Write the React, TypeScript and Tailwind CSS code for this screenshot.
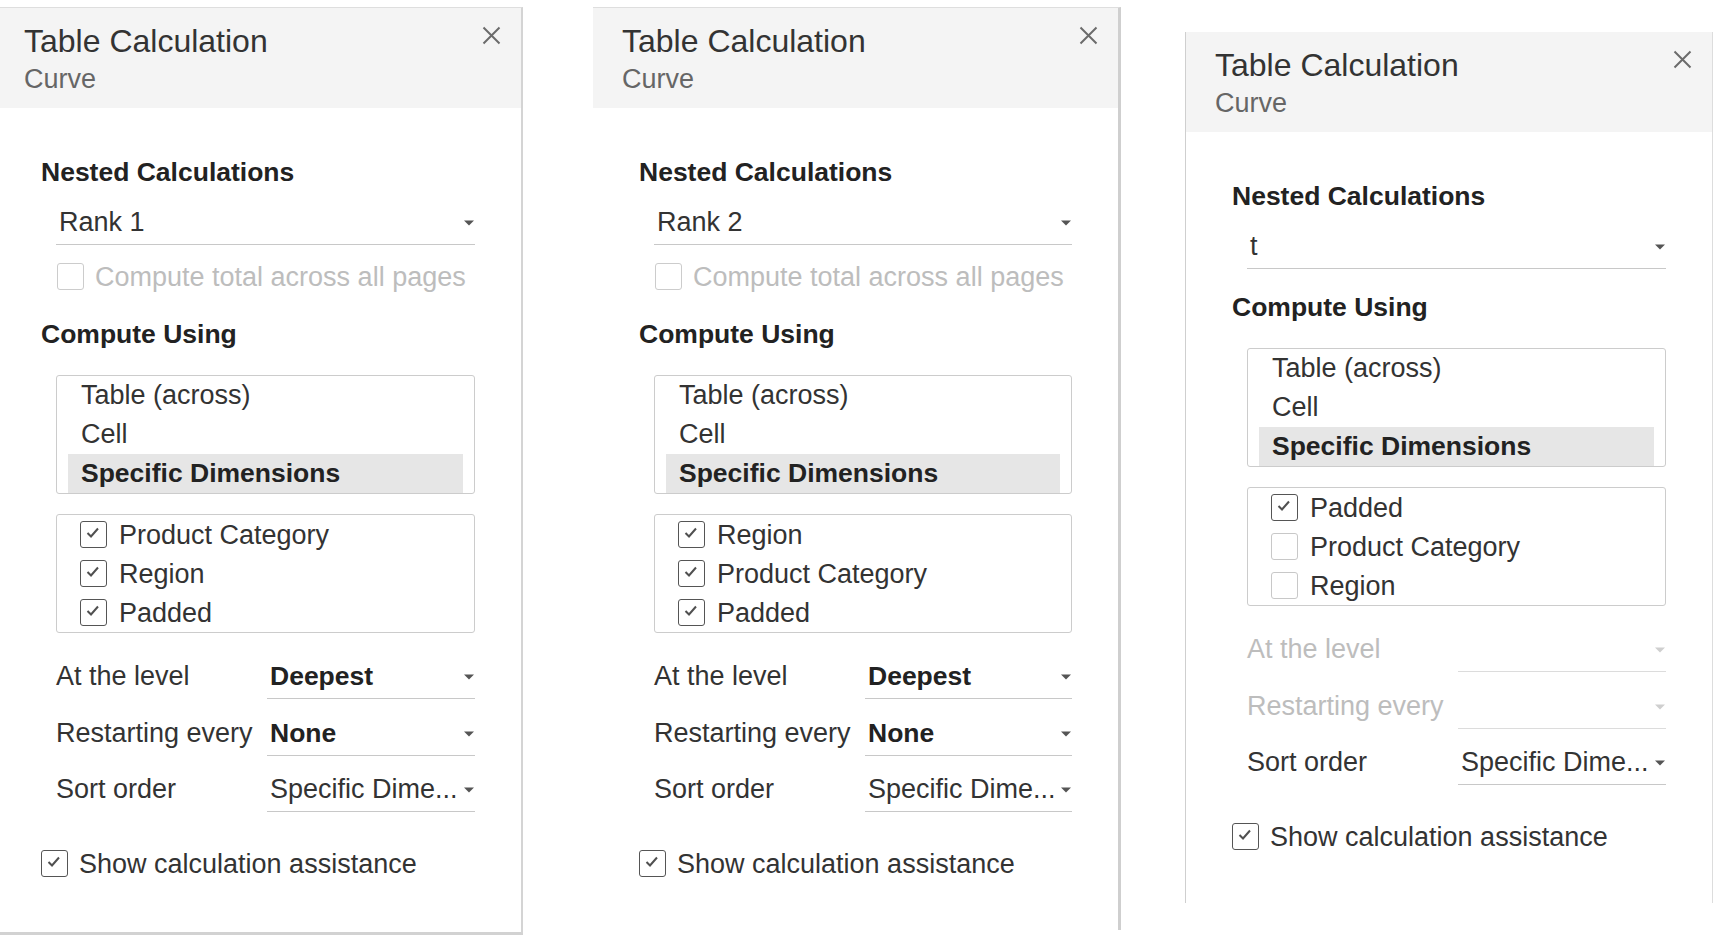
import type { ReactNode } from 'react';

const FONT = '"Liberation Sans", Arial, sans-serif';

type PanelProps = {
  rank: string;
  dims: Array<{ label: string; checked: boolean }>;
  showTotals: boolean;
  disabledLevels: boolean;
  frame: string;
};

function Caret({ muted }: { muted?: boolean }) {
  return (
    <svg width="10" height="6" viewBox="0 0 10 6" className="shrink-0 mt-[2px]">
      <path d="M0 0.5 L10 0.5 L5 5.5 Z" fill={muted ? '#cfcfcf' : '#555555'} />
    </svg>
  );
}

function Check({ checked, light }: { checked: boolean; light?: boolean }) {
  return (
    <div
      className={`w-[27px] h-[27px] shrink-0 rounded-[3px] border-[1.5px] bg-white ${
        light ? 'border-[#cccccc]' : checked ? 'border-[#555555]' : 'border-[#c8c8c8]'
      }`}
    >
      {checked && (
        <svg width="24" height="24" viewBox="0 0 24 24">
          <path d="M6.5 11 L10 14.5 L17 6.5" fill="none" stroke="#505050" strokeWidth="2" />
        </svg>
      )}
    </div>
  );
}

function Dropdown({ children, muted, bold }: { children?: ReactNode; muted?: boolean; bold?: boolean }) {
  return (
    <div
      className={`flex items-center flex-1 pl-[3px] pr-[1px] pt-[5px] pb-[6px] border-b ${
        muted ? 'border-[#dcdcdc]' : 'border-[#c8c8c8]'
      }`}
    >
      <span
        className={`flex-1 h-[32px] leading-[32px] whitespace-nowrap ${
          bold ? 'text-[26.5px] font-bold text-[#222222]' : 'text-[27px] text-[#333333]'
        }`}
      >
        {children}
      </span>
      <Caret muted={muted} />
    </div>
  );
}

function LevelRow({ label, value, muted, bold, first }: { label: string; value?: string; muted?: boolean; bold?: boolean; first?: boolean }) {
  return (
    <div className={`flex ${first ? 'mt-[22px]' : 'mt-[12.5px]'}`}>
      <div className={`w-[211px] pt-[5px] text-[27px] leading-[32px] whitespace-nowrap ${muted ? 'text-[#bdbdbd]' : 'text-[#333333]'}`}>
        {label}
      </div>
      <Dropdown muted={muted} bold={bold}>
        {value}
      </Dropdown>
    </div>
  );
}

function Panel({ rank, dims, showTotals, disabledLevels, frame }: PanelProps) {
  return (
    <div className={`shrink-0 w-[528px] flex flex-col bg-white ${frame}`} style={{ fontFamily: FONT }}>
      <div className="h-[100px] bg-[#f4f4f4] flex justify-between pl-[29px] pr-[20px] pt-[13.5px]">
        <div>
          <div className="text-[32px] leading-[38px] text-[#333333]">Table Calculation</div>
          <div className="mt-[3px] text-[27px] leading-[32px] text-[#666666]">Curve</div>
        </div>
        <svg width="19" height="19" viewBox="0 0 19 19" className="mt-[4.5px]">
          <path d="M1.5 1.5 L17.5 17.5 M17.5 1.5 L1.5 17.5" stroke="#6b6b6b" strokeWidth="2" />
        </svg>
      </div>

      <div className="flex flex-col px-[46px] pt-[48px]">
        <div className="text-[26.5px] leading-[32px] font-bold text-[#222222]">Nested Calculations</div>
        <div className="flex pl-[15px] mt-[13px]">
          <Dropdown>{rank}</Dropdown>
        </div>
        {showTotals && (
          <div className="flex items-center gap-[11px] pl-[16px] mt-[18px] h-[27px]">
            <Check checked={false} light />
            <span className="text-[27px] leading-[32px] text-[#bdbdbd] whitespace-nowrap">
              Compute total across all pages
            </span>
          </div>
        )}

        <div
          className={`text-[26.5px] leading-[32px] font-bold text-[#222222] ${showTotals ? 'mt-[28px]' : 'mt-[22px]'}`}
        >
          Compute Using
        </div>

        <div className="ml-[15px] mt-[25px] border border-[#cccccc] rounded-[3px] px-[11px]">
          <div className="h-[39px] pl-[13px] text-[27px] leading-[39px] text-[#333333]">Table (across)</div>
          <div className="h-[39px] pl-[13px] text-[27px] leading-[39px] text-[#333333]">Cell</div>
          <div className="h-[39px] pl-[13px] text-[26.5px] leading-[39px] font-bold text-[#222222] bg-[#e6e6e6]">
            Specific Dimensions
          </div>
        </div>

        <div className="ml-[15px] mt-[20px] border border-[#cccccc] rounded-[3px] pl-[23px]">
          {dims.map((d) => (
            <div key={d.label} className="h-[39px] flex items-center gap-[12px]">
              <Check checked={d.checked} />
              <span className="text-[27px] leading-[32px] text-[#333333] whitespace-nowrap">{d.label}</span>
            </div>
          ))}
        </div>

        <div className="flex flex-col pl-[15px]">
          <LevelRow first label="At the level" value={disabledLevels ? '' : 'Deepest'} muted={disabledLevels} bold />
          <LevelRow label="Restarting every" value={disabledLevels ? '' : 'None'} muted={disabledLevels} bold />
          <LevelRow label="Sort order" value="Specific Dime..." />
        </div>

        <div className="flex items-center gap-[11px] mt-[38px] h-[27px]">
          <Check checked />
          <span className="text-[27px] leading-[32px] text-[#333333] whitespace-nowrap">Show calculation assistance</span>
        </div>
      </div>
    </div>
  );
}

export default function App() {
  return (
    <div className="w-[1713px] h-[936px] overflow-hidden bg-white flex items-start">
      <div className="ml-[-5px] mt-[7px]">
        <Panel
          rank="Rank 1"
          showTotals
          disabledLevels={false}
          frame="h-[928px] border-t border-t-[#dedede] border-r-2 border-r-[#d4d4d4] border-b-[3px] border-b-[#d2d2d2]"
          dims={[
            { label: 'Product Category', checked: true },
            { label: 'Region', checked: true },
            { label: 'Padded', checked: true },
          ]}
        />
      </div>
      <div className="ml-[70px] mt-[7px]">
        <Panel
          rank="Rank 2"
          showTotals
          disabledLevels={false}
          frame="h-[923px] border-t border-t-[#dedede] border-r-[3px] border-r-[#cfcfcf]"
          dims={[
            { label: 'Region', checked: true },
            { label: 'Product Category', checked: true },
            { label: 'Padded', checked: true },
          ]}
        />
      </div>
      <div className="ml-[64px] mt-[32px]">
        <Panel
          rank="t"
          showTotals={false}
          disabledLevels
          frame="h-[871px] border-l border-l-[#cfcfcf] border-r border-r-[#dddddd]"
          dims={[
            { label: 'Padded', checked: true },
            { label: 'Product Category', checked: false },
            { label: 'Region', checked: false },
          ]}
        />
      </div>
    </div>
  );
}
